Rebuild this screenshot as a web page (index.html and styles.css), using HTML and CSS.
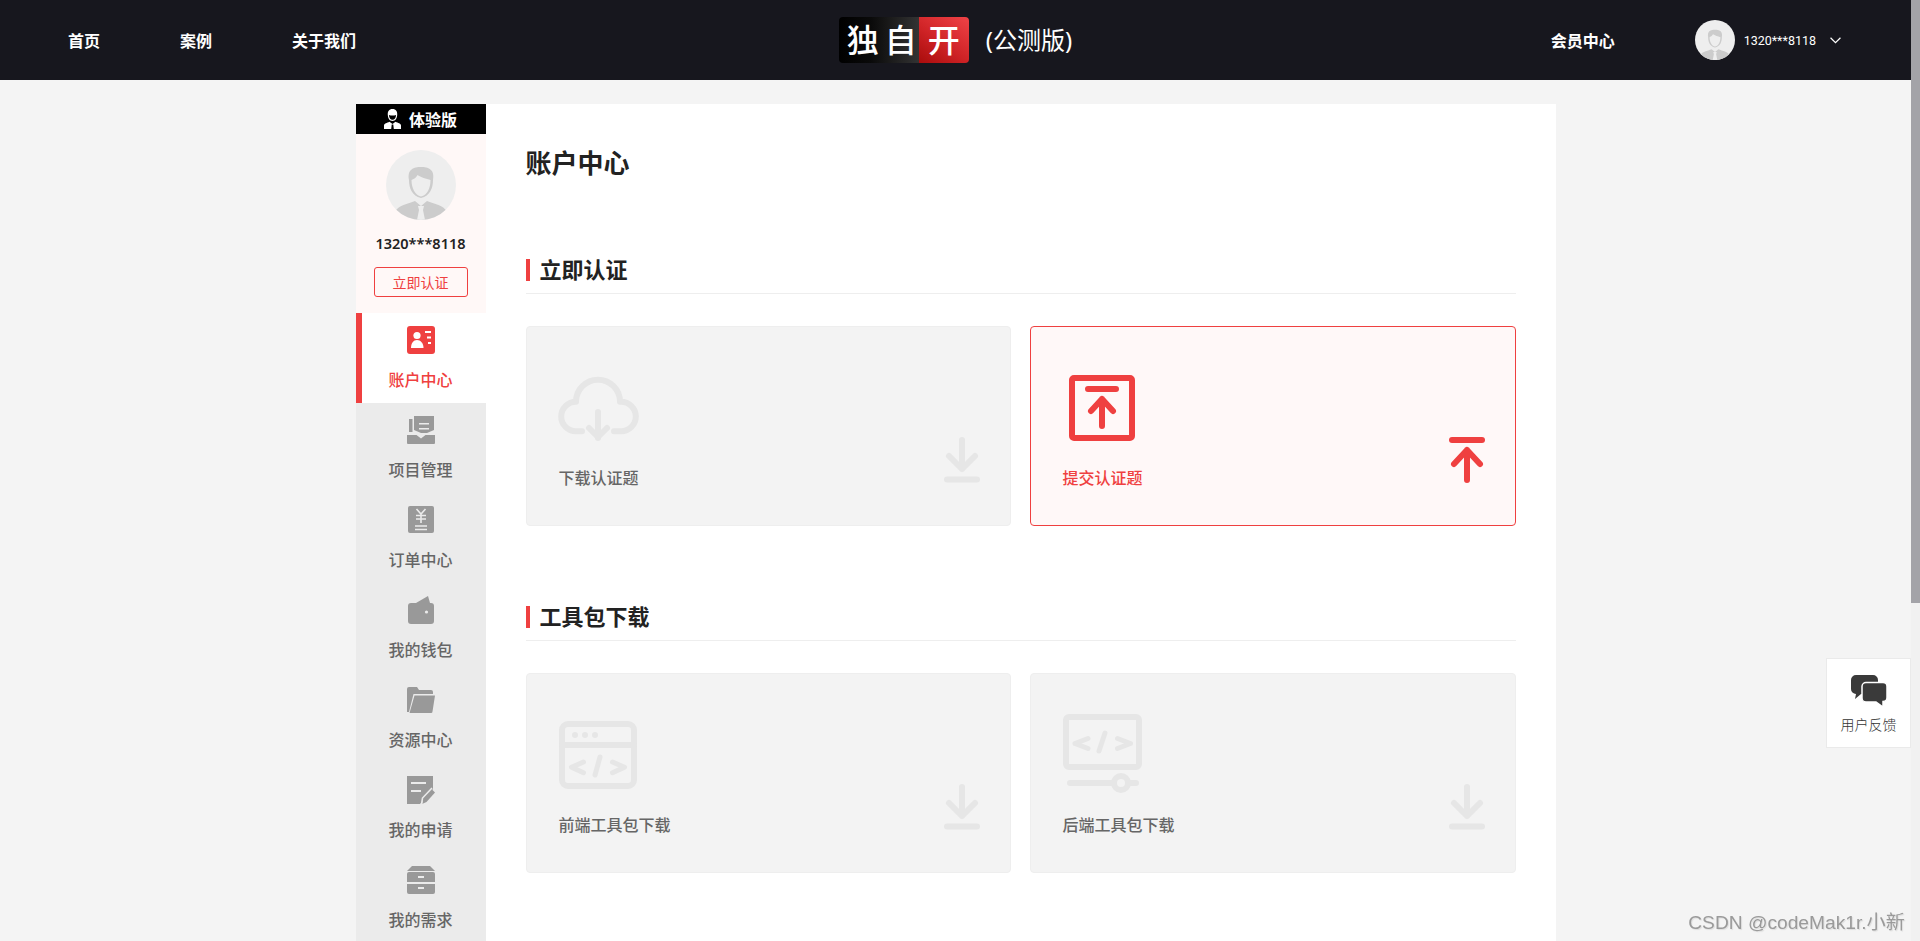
FILE: index.html
```html
<!DOCTYPE html>
<html lang="zh-CN">
<head>
  <meta charset="UTF-8" />
  <meta name="viewport" content="width=device-width, initial-scale=1.0" />
  <title>账户中心 - 独自开</title>
  <link rel="stylesheet" href="styles.css">
</head>
<body>
  <!-- Shared icons -->
  <svg class="defs" width="0" height="0" aria-hidden="true">
    <defs>
      <clipPath id="avatarClip"><circle cx="35" cy="35" r="35" /></clipPath>
      <symbol id="avatar" viewBox="0 0 70 70">
        <g clip-path="url(#avatarClip)">
          <rect width="70" height="70" fill="#eee" />
          <path d="M23 30C21 19 28 17 35 17s14 2 12 13c0 8-3 16-12 18-9-2-12-10-12-18z" fill="#ccc" />
          <path d="M25.500 30c3-1 5-3 6-5 3 2 9 4 13 5 0 8-3 15-9.500 16.500C29 45 25.500 38 25.500 30z" fill="#eee" />
          <path d="M9 62c3-7 13-8 20-11l6 5 6-5c7 3 17 4 20 11v8H9z" fill="#ccc" />
          <path d="M32 56h6l-1 4 2 10h-8l2-10z" fill="#eee" />
        </g>
      </symbol>
      <symbol id="smallDownload" viewBox="0 0 36 46">
        <rect y="39.500" width="36" height="6" rx="3" fill="#e6e6e6" />
        <path d="M18 3v29M5 19l13 13 13-13" fill="none" stroke="#e6e6e6" stroke-width="6" stroke-linecap="round" stroke-linejoin="round" />
      </symbol>
    </defs>
  </svg>

  <div class="page">
    <!-- Top bar -->
    <header class="topbar">
      <nav class="nav-menu">
        <a href="#">首页</a>
        <a href="#">案例</a>
        <a href="#">关于我们</a>
      </nav>

      <div class="brand">
        <div class="logo">
          <span class="logo-left">独<i>自</i></span>
          <span class="logo-right">开</span>
        </div>
        <span class="brand-note">(公测版)</span>
      </div>

      <div class="topbar-right">
        <a href="#" class="member-link">会员中心</a>
        <svg class="top-avatar"><use href="#avatar" /></svg>
        <span class="top-phone">1320***8118</span>
        <svg class="chevron" viewBox="0 0 10 6"><path d="M.5.500 5 5 9.500.500" /></svg>
      </div>
    </header>

    <div class="layout">
      <!-- Sidebar -->
      <aside class="sidebar">
        <div class="version-tag">
          <svg class="version-icon" viewBox="0 0 17 20">
            <path d="M8.500 0C5 0 3.500 2.500 3.800 6c.2 3 1.700 6 4.700 6s4.500-3 4.700-6C13.500 2.500 12 0 8.500 0z" fill="#fff" />
            <path d="M5 6c2 .8 5 .8 7 0 0 3-1.500 4.800-3.500 4.800S5 9 5 6z" fill="#000" />
            <path d="M0 20v-3.500c0-2 3-2.700 5.500-3.800L8.500 15l3-2.300c2.500 1.100 5.500 1.800 5.500 3.800V20z" fill="#fff" />
            <path d="M7.700 15.500h1.600l.5 4.500H7.200z" fill="#000" />
          </svg>
          <span>体验版</span>
        </div>
        <div class="profile">
          <svg class="profile-avatar"><use href="#avatar" /></svg>
          <div class="profile-phone">1320***8118</div>
          <a href="#" class="verify-btn">立即认证</a>
        </div>
        <ul class="side-menu">
          <li class="active">
            <svg viewBox="0 0 28 28">
              <rect width="28" height="28" rx="3" fill="#ef4040" />
              <circle cx="10" cy="9.500" r="3.600" fill="#fff" />
              <path d="M4 22c0-5 2.500-8 6-8s6.500 3 6.500 8z" fill="#fff" />
              <path d="M18 5h6v2h-6zM20 10.500h4v2h-4zM21 16h3v2h-3z" fill="#fff" />
            </svg>
            <span>账户中心</span>
          </li>
          <li>
            <svg viewBox="0 0 28 28">
              <path d="M7 0h20v14l-7 3h-6l-7-3z" />
              <path d="M2 3h3.500v13H2z" />
              <path d="M0 19h9.500l4.500 3.500 4.500-3.500H28v8a1 1 0 0 1-1 1H1a1 1 0 0 1-1-1z" />
              <path d="M12 7h10v1.500H12zM12 12h10v1.500H12z" class="cut" />
            </svg>
            <span>项目管理</span>
          </li>
          <li>
            <svg viewBox="0 0 28 28">
              <rect x="1" width="26" height="27" rx="2" />
              <path d="M9.500 3l4.500 5 4.500-5M14 8v9M9 9.500h10M9 13h10M8 20h12M8 23.500h12" class="cut-line" />
            </svg>
            <span>订单中心</span>
          </li>
          <li>
            <svg viewBox="0 0 28 28">
              <path d="M9 7l12-7 2 7z" />
              <path d="M4 7h20a3 3 0 0 1 3 3v15a3 3 0 0 1-3 3H4a3 3 0 0 1-3-3V10a3 3 0 0 1 3-3z" />
              <circle cx="19.500" cy="16" r="1.600" />
            </svg>
            <span>我的钱包</span>
          </li>
          <li>
            <svg viewBox="0 0 28 28">
              <path d="M0 3a2 2 0 0 1 2-2h8l2 3h12a2 2 0 0 1 2 2v2H6.500L2 26H0z" />
              <path d="M7.500 9.500H28l-2.500 16a1.500 1.500 0 0 1-1.500 1.500H2.500z" />
            </svg>
            <span>资源中心</span>
          </li>
          <li>
            <svg viewBox="0 0 28 28">
              <path d="M0 0h26v13L13 28H0z" />
              <path d="M4 6h15v2H4zM4 14h10v2H4z" class="cut" />
              <path d="M15 28l1.500-5.500L25 13.500l3 3-8.500 9.500z" />
              <path d="M14.500 28.500l1-6.500L25 12" class="cut-line" />
            </svg>
            <span>我的申请</span>
          </li>
          <li>
            <svg viewBox="0 0 28 28">
              <path d="M5 0h18l5 5H0z" />
              <path d="M2 6h24a2 2 0 0 1 2 2v8H0V8a2 2 0 0 1 2-2z" />
              <path d="M0 18h28v8a2 2 0 0 1-2 2H2a2 2 0 0 1-2-2z" />
              <path d="M11 10h6v2h-6zM11 21h6v2h-6z" class="cut" />
            </svg>
            <span>我的需求</span>
          </li>
        </ul>
      </aside>

      <!-- Account content -->
      <main class="content">
        <h1>账户中心</h1>

        <section class="section">
          <h2>立即认证</h2>
          <div class="card-grid">
            <a href="#" class="card">
              <div class="card-main">
                <svg class="card-icon" viewBox="0 0 80 80">
                  <path d="M23 63.300H17a14.800 14.800 0 0 1 0-29.600 22 22 0 0 1 44 0h1a14.800 14.800 0 0 1 0 29.600h-7" />
                  <path d="M39 44v26M30 60l9 9 9-9" />
                </svg>
                <div class="card-title">下载认证题</div>
              </div>
              <svg class="card-arrow"><use href="#smallDownload" /></svg>
            </a>
            <a href="#" class="card card-active">
              <div class="card-main">
                <svg class="card-icon" viewBox="0 0 80 80">
                  <rect x="9" y="10" width="60" height="60" rx="2" />
                  <path d="M25 21h28M39 58V31M28 43l11-12 11 12" />
                </svg>
                <div class="card-title">提交认证题</div>
              </div>
              <svg class="card-arrow" viewBox="0 0 36 46">
                <rect width="36" height="6" rx="3" />
                <path d="M18 43V13M5 27l13-14 13 14" class="line" />
              </svg>
            </a>
          </div>
        </section>

        <section class="section">
          <h2>工具包下载</h2>
          <div class="card-grid">
            <a href="#" class="card">
              <div class="card-main">
                <svg class="card-icon" viewBox="0 0 80 80">
                  <rect x="3" y="9" width="72" height="62" rx="6" />
                  <path d="M3 30h72" />
                  <circle cx="16" cy="20" r="3" class="fill" />
                  <circle cx="26" cy="20" r="3" class="fill" />
                  <circle cx="36" cy="20" r="3" class="fill" />
                  <path d="M24.500 47l-12 5.300 12 5.400M41 42l-5 18M53.500 47l12 5.300-12 5.400" class="thin" />
                </svg>
                <div class="card-title">前端工具包下载</div>
              </div>
              <svg class="card-arrow"><use href="#smallDownload" /></svg>
            </a>
            <a href="#" class="card">
              <div class="card-main">
                <svg class="card-icon" viewBox="0 0 80 80">
                  <rect x="3" y="2" width="73" height="50" rx="3" />
                  <path d="M25 23.500l-13 5 13 5M42 18l-6 18M54.500 23.500l13 5-13 5" class="thin" />
                  <path d="M7 68h66" />
                  <circle cx="58" cy="68" r="7" class="hole" />
                </svg>
                <div class="card-title">后端工具包下载</div>
              </div>
              <svg class="card-arrow"><use href="#smallDownload" /></svg>
            </a>
          </div>
        </section>
      </main>
    </div>

    <!-- Floating feedback button -->
    <a href="#" class="feedback">
      <svg viewBox="0 0 36 32">
        <path d="M5 0h17a5 5 0 0 1 5 5v9a5 5 0 0 1-5 5H10l-6 5 1-5a5 5 0 0 1-5-5V5a5 5 0 0 1 5-5z" />
        <path d="M15 7.500h17a4 4 0 0 1 4 4v11a4 4 0 0 1-4 4v5.500L25 27H15a4 4 0 0 1-4-4V11.500a4 4 0 0 1 4-4z" class="front" />
      </svg>
      <span>用户反馈</span>
    </a>

    <div class="watermark">CSDN @codeMak1r.小新</div>
  </div>

  <!-- Page scrollbar -->
  <div class="scrollbar"><div class="scrollbar-thumb"></div></div>
</body>
</html>
```

FILE: styles.css
```css
/* Base Reset */
*, *::before, *::after {
  box-sizing: border-box;
  margin: 0;
  padding: 0;
}
html, body {
  height: 100%;
  overflow: hidden;
}
body {
  font-family: "Noto Sans", "Noto Sans CJK SC", sans-serif;
  background: #f4f4f4;
  color: #222;
  display: flex;
}
a { text-decoration: none; color: inherit; }
ul { list-style: none; }
.defs { position: absolute; }

/* Page and scrollbar */
.page {
  flex: 1;
  min-width: 0;
  height: 100vh;
  overflow: hidden;
}
.scrollbar {
  width: 9px;
  flex-shrink: 0;
  background: #f1f1f1;
}
.scrollbar-thumb {
  height: 603px;
  background: #a3a3a8;
}

/* Top bar */
.topbar {
  height: 80px;
  background: #17171e;
  color: #fff;
  display: grid;
  grid-template-columns: 1fr auto 1fr;
  align-items: center;
}
.nav-menu {
  display: flex;
  gap: 80px;
  padding-left: 68px;
  font-size: 16px;
  font-weight: 700;
}
.brand {
  display: flex;
  align-items: center;
  gap: 17px;
}
.logo {
  width: 130px;
  height: 46px;
  display: flex;
  border-radius: 4px;
  overflow: hidden;
  font-size: 32px;
  line-height: 46px;
  font-weight: 500;
  color: #fff;
}
.logo-left {
  width: 80px;
  padding-left: 8px;
  white-space: nowrap;
  background: linear-gradient(90deg, #000 0%, #0a0a0a 40%, #333 100%);
}
.logo-left i {
  font-style: normal;
  margin-left: 6px;
}
.logo-right {
  width: 50px;
  text-align: center;
  background: linear-gradient(35deg, #a90c0c 0%, #cf2326 45%, #f04347 100%);
}
.brand-note {
  font-size: 24px;
  line-height: 32px;
}
.topbar-right {
  display: flex;
  align-items: center;
  justify-content: flex-end;
  padding-right: 70px;
}
.member-link {
  font-size: 16px;
  font-weight: 700;
  margin-right: 80px;
}
.top-avatar {
  width: 40px;
  height: 40px;
  margin-right: 9px;
}
.top-phone {
  font-family: Roboto, sans-serif;
  font-size: 12.5px;
  margin-right: 14px;
}
.chevron {
  width: 11px;
  height: 7px;
  fill: none;
  stroke: #fff;
  stroke-width: 1.1;
}

/* Page body */
.layout {
  width: 1200px;
  min-height: 1364px;
  margin: 24px auto 0;
  display: flex;
}

/* Sidebar */
.sidebar {
  width: 130px;
  flex-shrink: 0;
  background: #ebebeb;
}
.version-tag {
  height: 30px;
  background: #000;
  color: #fff;
  font-size: 16px;
  font-weight: 700;
  display: flex;
  align-items: center;
  justify-content: center;
  gap: 8px;
}
.version-icon { width: 17px; height: 20px; }
.profile {
  height: 179px;
  background: #fff8f7;
  padding-top: 16px;
  display: flex;
  flex-direction: column;
  align-items: center;
}
.profile-avatar { width: 70px; height: 70px; }
.profile-phone {
  margin-top: 11px;
  font-size: 14.5px;
  font-weight: 600;
  line-height: 24px;
}
.verify-btn {
  margin-top: 12px;
  width: 94px;
  height: 30px;
  line-height: 29px;
  text-align: center;
  font-size: 14px;
  color: #ef4040;
  border: 1px solid #ef4040;
  border-radius: 3px;
}
.side-menu li {
  height: 90px;
  padding-top: 13px;
  display: flex;
  flex-direction: column;
  align-items: center;
  color: #666;
  font-size: 16px;
  font-weight: 500;
  line-height: 24px;
  gap: 14px;
}
.side-menu li svg {
  width: 28px;
  height: 28px;
  fill: #999;
}
.side-menu .cut { fill: #ebebeb; }
.side-menu li circle { fill: #ebebeb; }
.side-menu li.active circle { fill: #fff; }
.side-menu .cut-line {
  fill: none;
  stroke: #ebebeb;
  stroke-width: 1.600;
}
.side-menu li.active {
  background: #fff;
  color: #ef4040;
  border-left: 6px solid #ef4040;
  padding-right: 6px;
}

/* Main content */
.content {
  flex: 1;
  background: #fff;
  padding: 41px 40px 0;
}
.content h1 {
  font-size: 26px;
  line-height: 36px;
  font-weight: 700;
  margin-bottom: 78px;
}
.section { margin-bottom: 80px; }
.section h2 {
  height: 35px;
  padding-left: 14px;
  border-bottom: 1px solid #eee;
  font-size: 22px;
  line-height: 20px;
  font-weight: 700;
  position: relative;
}
.section h2::before {
  content: "";
  position: absolute;
  left: 0;
  top: 0;
  width: 4px;
  height: 22px;
  background: #ef4040;
}
.card-grid {
  margin-top: 32px;
  display: grid;
  grid-template-columns: 485px 486px;
  gap: 19px;
}

/* Cards */
.card {
  height: 200px;
  background: #f3f3f3;
  border: 1px solid #eee;
  border-radius: 4px;
  padding: 41px 30px 42px 32px;
  display: flex;
  justify-content: space-between;
  align-items: flex-end;
  color: #666;
}
.card-main { align-self: flex-start; }
.card-icon {
  display: block;
  width: 80px;
  height: 80px;
  overflow: visible;
  fill: none;
  stroke: #e6e6e6;
  stroke-width: 6;
  stroke-linecap: round;
  stroke-linejoin: round;
}
.card-icon .fill { fill: #e6e6e6; stroke: none; }
.card-icon .thin { stroke-width: 5; }
.card-icon .hole { fill: #f3f3f3; }
.card-title {
  margin-top: 18px;
  font-size: 16px;
  line-height: 24px;
  font-weight: 500;
  white-space: nowrap;
}
.card-arrow {
  width: 36px;
  height: 46px;
}
.card-active {
  background: #fff8f8;
  border-color: #ef4040;
  color: #ef4040;
}
.card-active .card-icon { stroke: #ef4040; }
.card-active .card-arrow { fill: #ef4040; }
.card-active .card-arrow .line {
  fill: none;
  stroke: #ef4040;
  stroke-width: 6;
  stroke-linecap: round;
  stroke-linejoin: round;
}

/* Floating button and watermark */
.feedback {
  position: fixed;
  right: 9px;
  top: 658px;
  width: 85px;
  height: 90px;
  background: #fff;
  border: 1px solid #eaeaea;
  display: flex;
  flex-direction: column;
  align-items: center;
  padding-top: 16px;
  font-size: 14px;
  font-weight: 300;
  color: #333;
}
.feedback svg {
  width: 36px;
  height: 32px;
  fill: #3a3a3a;
  margin-bottom: 7px;
}
.feedback .front {
  stroke: #fff;
  stroke-width: 1.500;
}
.watermark {
  position: fixed;
  right: 15px;
  top: 911px;
  font-family: "Liberation Sans", "Noto Sans CJK SC", sans-serif;
  font-size: 19.2px;
  line-height: 24px;
  color: #9a9a9a;
  text-shadow: 1px 1px 1px #ddd;
}
```
